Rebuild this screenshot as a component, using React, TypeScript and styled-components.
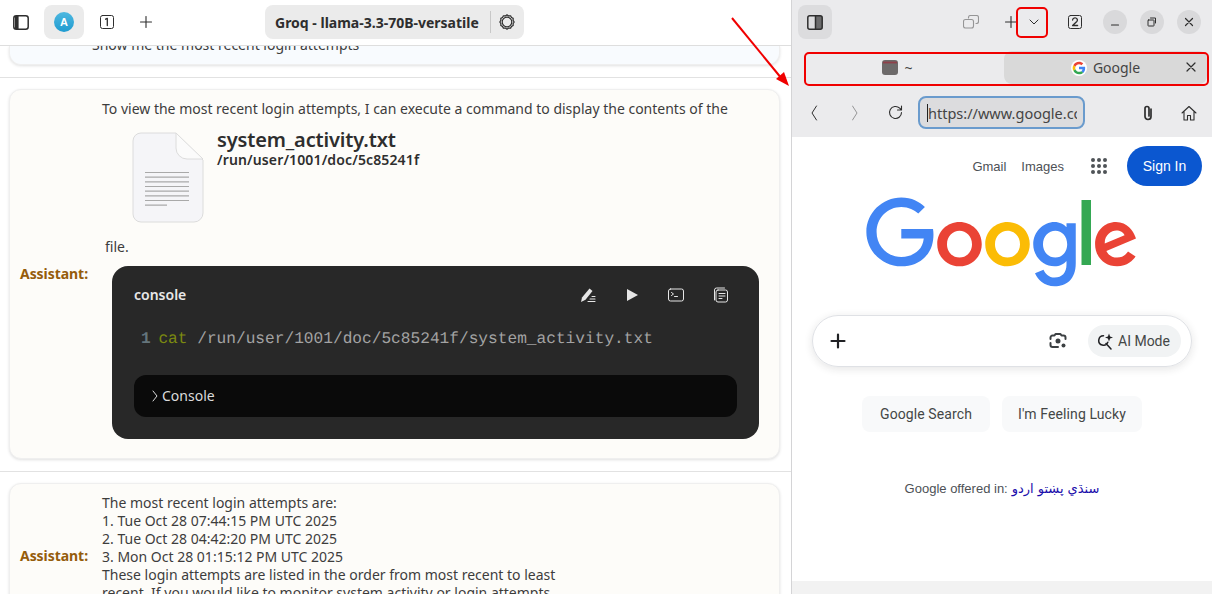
import styled, { createGlobalStyle } from "styled-components";

const GlobalStyle = createGlobalStyle`
  html, body {
    margin: 0;
    padding: 0;
    height: 100%;
    overflow: hidden;
    background: #ffffff;
  }
  #root {
    height: 100%;
  }
  * {
    box-sizing: border-box;
  }
`;

const Desktop = styled.div`
  position: relative;
  display: flex;
  width: 1212px;
  height: 594px;
  overflow: hidden;
  font-family: "Noto Sans", sans-serif;
`;

/* Venstre vindue med chatten */
const ChatPane = styled.div`
  display: flex;
  flex-direction: column;
  flex: none;
  width: 791px;
  height: 100%;
  background: #ffffff;
`;

const ChatHeader = styled.header`
  position: relative;
  display: flex;
  align-items: center;
  flex: none;
  height: 46px;
  padding: 0 0 1px 1px;
  background: #ffffff;
  border-bottom: 1px solid #dedede;
`;

const HeaderIcon = styled.button<{ $active?: boolean; $w?: number }>`
  display: flex;
  align-items: center;
  justify-content: center;
  width: ${(p) => p.$w ?? 40}px;
  height: 34px;
  padding: 0;
  border: 0;
  border-radius: 8px;
  color: #2e2e2e;
  background: ${(p) => (p.$active ? "#ebebeb" : "transparent")};
`;

const HeaderIcons = styled.div`
  display: flex;
  align-items: center;
  gap: 3px;
`;

const Avatar = styled.span`
  display: flex;
  align-items: center;
  justify-content: center;
  width: 20px;
  height: 20px;
  border-radius: 50%;
  color: #ffffff;
  font-size: 11px;
  font-weight: 600;
  background: linear-gradient(#4eb8e0, #1f9bd0);
`;

const ModelPicker = styled.div`
  position: absolute;
  top: 5px;
  left: 265px;
  display: flex;
  align-items: center;
  width: 259px;
  height: 34px;
  padding-left: 10px;
  border-radius: 8px;
  background: #ebebeb;
  color: #2e2e2e;
  font-size: 14px;
  font-weight: 700;
  white-space: nowrap;
`;

const ModelName = styled.span`
  width: 215px;
`;

const ModelDivider = styled.span`
  width: 1px;
  height: 22px;
  margin-right: 8px;
  background: #c8c8c8;
`;

const Messages = styled.div`
  display: flex;
  flex-direction: column;
  flex: 1;
  min-height: 0;
  overflow: hidden;
`;

const Card = styled.section<{ $tone: "user" | "assistant" }>`
  display: flex;
  align-items: center;
  flex: none;
  margin: 0 11px 0 9px;
  border-radius: 12px;
  border: 1px solid #efefef;
  background: ${(p) => (p.$tone === "user" ? "#f8fbfe" : "#fdfcf9")};
  box-shadow: 0 1px 3px rgba(0, 0, 0, 0.12);
`;

const ClippedCard = styled(Card)`
  align-items: flex-end;
  height: 19px;
  padding-left: 82px;
  border-top: 0;
  border-top-left-radius: 0;
  border-top-right-radius: 0;
  overflow: hidden;
  font-size: 14px;
  color: #3d3d3d;
`;

const ClippedText = styled.div`
  flex: none;
  padding-bottom: 10px;
  line-height: 18px;
`;

const Separator = styled.div`
  flex: none;
  height: 1px;
  margin: 12px 0 11px;
  background: #e2e2e2;
`;

const Role = styled.div`
  flex: none;
  width: 92px;
  padding: 0 0 2px 10px;
  color: #955c0b;
  font-size: 14px;
  font-weight: 700;
  letter-spacing: -0.05px;
`;

const Body = styled.div<{ $top: number; $bottom: number }>`
  flex: 1;
  min-width: 0;
  padding: ${(p) => p.$top}px 20px ${(p) => p.$bottom}px 0;
  color: #3d3d3d;
  font-size: 14px;
  line-height: 18px;
`;

const FileRow = styled.div`
  display: flex;
  align-items: flex-start;
  gap: 13px;
  margin: 10px 0 14px 30px;
`;

const FileIcon = styled.svg`
  display: block;
  flex: none;
  margin-top: 4px;
`;

const FileTitle = styled.div`
  margin-top: 1px;
  color: #2e2e2e;
  font-size: 20px;
  font-weight: 600;
  line-height: 22px;
  letter-spacing: -0.15px;
`;

const FilePath = styled.div`
  color: #2e2e2e;
  font-size: 14px;
  font-weight: 600;
  line-height: 17px;
  letter-spacing: 0.13px;
`;

const TrailingWord = styled.div`
  padding-left: 3px;
`;

const CodeBlock = styled.div`
  margin: 10px 0 0 10px;
  width: 647px;
  height: 173px;
  padding: 0 22px;
  border-radius: 16px;
  background: #282828;
`;

const CodeHeader = styled.div`
  display: flex;
  align-items: center;
  justify-content: space-between;
  height: 58px;
`;

const CodeLang = styled.span`
  color: #e8e8e8;
  font-size: 14px;
  font-weight: 600;
`;

const CodeTools = styled.div`
  display: flex;
  align-items: center;
  gap: 26px;
  padding-right: 8px;
  color: #e6e6e6;
`;

const CodeLine = styled.div`
  height: 51px;
  padding: 7px 0 0 7px;
  font-family: "Liberation Mono", monospace;
  font-size: 16.17px;
  text-rendering: geometricPrecision;
  line-height: 16px;
  color: #a3a3a3;
  white-space: pre;
`;

const LineNumber = styled.span`
  margin-right: -2px;
  color: #65757c;
  font-weight: 700;
`;

const Keyword = styled.span`
  color: #7c8a10;
`;

const ConsoleBar = styled.div`
  display: flex;
  align-items: center;
  gap: 3px;
  height: 42px;
  padding-left: 17px;
  border-radius: 12px;
  background: #0a0a0a;
  color: #dcdcdc;
  font-size: 14px;
`;

/* Højre vindue med browseren */
const BrowserPane = styled.div`
  display: flex;
  flex-direction: column;
  flex: none;
  width: 421px;
  height: 100%;
  border-left: 1px solid #d4d4d6;
  background: #ebebed;
`;

const TitleBar = styled.div`
  display: flex;
  align-items: center;
  flex: none;
  height: 44px;
  padding: 0 11px 0 6px;
  color: #2e2e2e;
`;

const ToggleButton = styled.button`
  display: flex;
  align-items: center;
  justify-content: center;
  flex: none;
  width: 34px;
  height: 34px;
  margin-right: 119px;
  padding: 0;
  border: 0;
  border-radius: 8px;
  color: #2e2e2e;
  background: #dcdcde;
`;

const BarIcon = styled.span<{ $w: number; $ml?: number; $faded?: boolean }>`
  display: flex;
  align-items: center;
  justify-content: center;
  flex: none;
  width: ${(p) => p.$w}px;
  margin-left: ${(p) => p.$ml ?? 0}px;
  opacity: ${(p) => (p.$faded ? 0.45 : 1)};
`;

const WindowButton = styled.button`
  display: flex;
  align-items: center;
  justify-content: center;
  flex: none;
  width: 24px;
  height: 24px;
  margin-left: 13px;
  padding: 0;
  border: 0;
  border-radius: 50%;
  color: #2e2e2e;
  background: #d9d9db;
`;

const TabStrip = styled.div`
  display: grid;
  grid-template-columns: 199px 1fr;
  flex: none;
  height: 33px;
  margin: 7px 5px 0 13px;
  color: #444444;
  font-size: 14px;
`;

const Tab = styled.div<{ $selected?: boolean }>`
  position: relative;
  display: flex;
  align-items: center;
  justify-content: center;
  gap: 6px;
  padding-right: ${(p) => (p.$selected ? 0 : 14)}px;
  border-radius: 8px;
  background: ${(p) => (p.$selected ? "#d9d9d9" : "transparent")};
`;

const TabClose = styled.span`
  position: absolute;
  right: 11px;
  top: 11px;
  display: flex;
  color: #2e2e2e;
`;

const NavBar = styled.div`
  display: flex;
  align-items: center;
  flex: none;
  height: 53px;
  padding: 4px 0 0 2px;
  color: #2e2e2e;
`;

const UrlBox = styled.div`
  flex: none;
  display: flex;
  align-items: center;
  width: 167px;
  height: 33px;
  margin: 0 43px 0 3px;
  padding: 0 6px 0 7px;
  border: 2px solid #6a9bcd;
  border-radius: 8px;
  background: #dcdcde;
  color: #444444;
  font-size: 14.5px;
  white-space: nowrap;
`;

const UrlText = styled.span`
  overflow: hidden;
`;

const Caret = styled.span`
  flex: none;
  width: 1px;
  height: 18px;
  background: #222222;
`;

const WebPage = styled.main`
  display: flex;
  flex-direction: column;
  align-items: center;
  flex: none;
  height: 444px;
  background: #ffffff;
`;

const PageFooter = styled.div`
  flex: 1;
  background: #f2f2f2;
`;

const TopLinks = styled.nav`
  display: flex;
  align-items: center;
  align-self: stretch;
  justify-content: flex-end;
  height: 40px;
  margin-top: 9px;
  padding-right: 10px;
  font-family: "Liberation Sans", sans-serif;
  font-size: 13px;
  color: #4d5156;
`;

const TopLink = styled.span`
  margin-right: 15px;
`;

const AppsGrid = styled.span`
  display: grid;
  grid-template-columns: repeat(3, 4px);
  gap: 2px;
  margin: 0 20px 0 12px;
`;

const AppsDot = styled.i`
  width: 4px;
  height: 4px;
  border-radius: 50%;
  background: #4f5357;
`;

const SignIn = styled.button`
  width: 75px;
  height: 40px;
  padding: 0;
  border: 0;
  border-radius: 20px;
  background: #0b57d0;
  color: #ffffff;
  font-family: "Liberation Sans", sans-serif;
  font-size: 14px;
  font-weight: 400;
`;

const Logo = styled.svg`
  flex: none;
  display: block;
  width: 272px;
  height: 92px;
  margin-top: 11px;
`;

const SearchBox = styled.div`
  display: flex;
  align-items: center;
  flex: none;
  width: 380px;
  height: 52px;
  margin-top: 26px;
  padding: 0 10px 0 17px;
  border: 1px solid #dfe1e5;
  border-radius: 26px;
  box-shadow: 0 2px 8px rgba(32, 33, 36, 0.12);
  color: #202124;
`;

const LensButton = styled.span`
  display: flex;
  margin-left: auto;
  margin-right: 21px;
  color: #3c4043;
`;

const AiMode = styled.div`
  display: flex;
  align-items: center;
  gap: 5px;
  width: 93px;
  height: 32px;
  padding-left: 8px;
  border-radius: 16px;
  background: #f1f3f4;
  color: #444746;
  font-family: Roboto, sans-serif;
  font-size: 14px;
  white-space: nowrap;
`;

const AiIcon = styled.span`
  display: flex;
  color: #202124;
`;

const SearchButtons = styled.div`
  display: flex;
  gap: 12px;
  margin-top: 29px;
`;

const SearchButton = styled.button<{ $w: number }>`
  width: ${(p) => p.$w}px;
  height: 36px;
  padding: 0;
  border: 0;
  border-radius: 8px;
  background: #f8f9fa;
  color: #444746;
  font-family: Roboto, sans-serif;
  font-size: 14px;
  letter-spacing: 0.1px;
`;

const Offered = styled.div`
  display: flex;
  align-items: baseline;
  gap: 4px;
  margin-top: 49px;
  font-family: "Liberation Sans", sans-serif;
  font-size: 13px;
  color: #4d5156;
`;

const Lang = styled.span`
  color: #1a0dab;
  font-family: "DejaVu Sans", sans-serif;
  font-size: 13px;
`;

/* Røde markeringer oven på skærmbilledet */
const Highlight = styled.div<{ $x: number; $y: number; $w: number; $h: number; $r: number }>`
  position: absolute;
  left: ${(p) => p.$x}px;
  top: ${(p) => p.$y}px;
  width: ${(p) => p.$w}px;
  height: ${(p) => p.$h}px;
  border: 2px solid #f00000;
  border-radius: ${(p) => p.$r}px;
  pointer-events: none;
`;

const ArrowOverlay = styled.svg`
  position: absolute;
  left: 725px;
  top: 12px;
  width: 70px;
  height: 80px;
  pointer-events: none;
`;

const Stroke = styled.svg.attrs({ fill: "none", stroke: "currentColor", strokeLinecap: "round", strokeLinejoin: "round" })`
  display: block;
  flex: none;
`;

function App() {
  return (
    <>
      <GlobalStyle />
      <Desktop>
        <ChatPane>
          <ChatHeader>
            <HeaderIcons>
              <HeaderIcon aria-label="sidebar">
                <Stroke width="16" height="15" viewBox="0 0 16 15" strokeWidth="1.5">
                  <rect x="0.8" y="0.8" width="14.4" height="13.4" rx="2.5" />
                  <path d="M2 1h3.6v13H2z" fill="currentColor" stroke="none" />
                </Stroke>
              </HeaderIcon>
              <HeaderIcon $active aria-label="account">
                <Avatar>A</Avatar>
              </HeaderIcon>
              <HeaderIcon aria-label="tabs">
                <Stroke width="14" height="14" viewBox="0 0 14 14" strokeWidth="1">
                  <rect x="0.5" y="0.5" width="13" height="13" rx="2" />
                  <path d="M5.6 4.2 7.3 3.4v7.2" strokeWidth="1.3" />
                </Stroke>
              </HeaderIcon>
              <HeaderIcon $w={32} aria-label="new tab">
                <Stroke width="12" height="12" viewBox="0 0 12 12" strokeWidth="1.1">
                  <path d="M6 .5v11M.5 6h11" />
                </Stroke>
              </HeaderIcon>
            </HeaderIcons>
            <ModelPicker>
              <ModelName>Groq - llama-3.3-70B-versatile</ModelName>
              <ModelDivider />
              <Stroke width="16" height="16" viewBox="0 0 16 16" strokeWidth="1.2">
                <path d="M8 .8l1.6 1.1 2-.1 .9 1.7 1.7 .9-.1 2L15.2 8l-1.1 1.6.1 1.9-1.7 .9-.9 1.7-2-.1L8 15.2l-1.6-1.2-2 .1-.9-1.7-1.700-.9.1-1.900L.8 8l1.100-1.600-.1-2 1.700-.9.9-1.700 2 .1z" />
                <circle cx="8" cy="8" r="4.8" />
              </Stroke>
            </ModelPicker>
          </ChatHeader>
          <Messages>
            <ClippedCard $tone="user">
              <ClippedText>Show me the most recent login attempts</ClippedText>
            </ClippedCard>
            <Separator />
            <Card $tone="assistant">
              <Role>Assistant:</Role>
              <Body $top={10} $bottom={19}>
                To view the most recent login attempts, I can execute a command to display the contents of the
                <FileRow>
                  <FileIcon width="72" height="92" viewBox="0 0 72 92">
                    <path d="M9 1h35l27 27v53a9 9 0 0 1-9 9H9a8 8 0 0 1-8-8V9a8 8 0 0 1 8-8z" fill="#f5f5f8" stroke="#dcdcdc" />
                    <path d="M44 1v15a11 11 0 0 0 11 11h16z" fill="#fbfbfb" stroke="#dcdcdc" />
                    <path d="M13 40.5h44M13 45.2h44M13 49.8h44M13 54.5h44M13 59.2h44M13 63.8h44M13 68.5h44M13 73.2h22" stroke="#a9a9a9" strokeWidth="1.2" />
                  </FileIcon>
                  <div>
                    <FileTitle>system_activity.txt</FileTitle>
                    <FilePath>/run/user/1001/doc/5c85241f</FilePath>
                  </div>
                </FileRow>
                <TrailingWord>file.</TrailingWord>
                <CodeBlock>
                  <CodeHeader>
                    <CodeLang>console</CodeLang>
                    <CodeTools>
                      <Stroke width="18" height="16" viewBox="0 0 18 16" strokeWidth="1.1">
                        <path d="M2 15l1-4.5L10.5 1.5 13.5 4l-7 8.8z" fill="currentColor" stroke="none" />
                        <path d="M9 14.5h7M11 12h5M13 9.5h3" />
                      </Stroke>
                      <Stroke width="18" height="16" viewBox="0 0 18 16">
                        <path d="M4 2v12l11-6z" fill="currentColor" stroke="none" />
                      </Stroke>
                      <Stroke width="18" height="16" viewBox="0 0 18 16" strokeWidth="1">
                        <rect x="1.5" y="2" width="15" height="12" rx="2" />
                        <path d="M4.5 5.5 6.5 7 4.5 8.5M7.5 9.5h3" />
                      </Stroke>
                      <Stroke width="18" height="16" viewBox="0 0 18 16" strokeWidth="1">
                        <path d="M3.5 13V3a2 2 0 0 1 2-2h8" />
                        <rect x="5" y="3" width="11.5" height="12" rx="2" />
                        <path d="M8 6.5h6M8 9h6M8 11.5h3" />
                      </Stroke>
                    </CodeTools>
                  </CodeHeader>
                  <CodeLine>
                    <LineNumber>1</LineNumber> <Keyword>cat</Keyword> /run/user/1001/doc/5c85241f/system_activity.txt
                  </CodeLine>
                  <ConsoleBar>
                    <Stroke width="8" height="12" viewBox="0 0 8 12" strokeWidth="1">
                      <path d="M2 1l4 5-4 5" />
                    </Stroke>
                    Console
                  </ConsoleBar>
                </CodeBlock>
              </Body>
            </Card>
            <Separator />
            <Card $tone="assistant">
              <Role>Assistant:</Role>
              <Body $top={10} $bottom={8}>
                The most recent login attempts are:
                <br />
                1. Tue Oct 28 07:44:15 PM UTC 2025
                <br />
                2. Tue Oct 28 04:42:20 PM UTC 2025
                <br />
                3. Mon Oct 28 01:15:12 PM UTC 2025
                <br />
                These login attempts are listed in the order from most recent to least
                <br />
                recent. If you would like to monitor system activity or login attempts
                <br />
                further, please let me know.
              </Body>
            </Card>
          </Messages>
        </ChatPane>

        <BrowserPane>
          <TitleBar>
            <ToggleButton aria-label="sidebar">
              <Stroke width="16" height="15" viewBox="0 0 16 15" strokeWidth="1.5">
                <rect x="0.8" y="0.8" width="14.4" height="13.4" rx="2" />
                <path d="M9 1h6v13H9z" fill="currentColor" stroke="none" opacity="0.65" />
                <path d="M8.5 1v13" />
              </Stroke>
            </ToggleButton>
            <BarIcon $w={40} $faded>
              <Stroke width="16" height="14" viewBox="0 0 16 14" strokeWidth="1.1">
                <path d="M5.5 3V2.5a2 2 0 0 1 2-2h6a2 2 0 0 1 2 2v4a2 2 0 0 1-2 2H13" />
                <rect x="0.5" y="4.5" width="10" height="8.5" rx="2" />
              </Stroke>
            </BarIcon>
            <BarIcon $w={28} $ml={6}>
              <Stroke width="12" height="12" viewBox="0 0 12 12" strokeWidth="1.1">
                <path d="M6 .5v11M.5 6h11" />
              </Stroke>
            </BarIcon>
            <BarIcon $w={18}>
              <Stroke width="10" height="6" viewBox="0 0 10 6" strokeWidth="1">
                <path d="M1 1l4 4 4-4" />
              </Stroke>
            </BarIcon>
            <BarIcon $w={30} $ml={17}>
              <Stroke width="14" height="14" viewBox="0 0 14 14" strokeWidth="1">
                <rect x="0.5" y="0.5" width="13" height="13" rx="2" />
                <path d="M4.6 5a2.4 2.2 0 1 1 4.2 1.5L4.6 10.5h5" strokeWidth="1.3" />
              </Stroke>
            </BarIcon>
            <WindowButton aria-label="minimize">
              <Stroke width="10" height="10" viewBox="0 0 10 10" strokeWidth="1.1">
                <path d="M1.5 8h7" />
              </Stroke>
            </WindowButton>
            <WindowButton aria-label="maximize">
              <Stroke width="10" height="10" viewBox="0 0 10 10" strokeWidth="1">
                <rect x="1" y="3" width="6" height="6" rx="0.5" />
                <path d="M3.5 1h5v5" />
              </Stroke>
            </WindowButton>
            <WindowButton aria-label="close">
              <Stroke width="10" height="10" viewBox="0 0 10 10" strokeWidth="1.2">
                <path d="M1.5 1.5l7 7M8.5 1.5l-7 7" />
              </Stroke>
            </WindowButton>
          </TitleBar>
          <TabStrip>
            <Tab>
              <svg width="16" height="15" viewBox="0 0 16 15">
                <rect x="0" y="0" width="16" height="15" rx="3" fill="#6d6a6a" />
                <path d="M1 2.5h14" stroke="#8f3f49" strokeWidth="1.8" />
              </svg>
              ~
            </Tab>
            <Tab $selected>
              <svg width="16" height="16" viewBox="0 0 48 48">
                <circle cx="24" cy="24" r="24" fill="#ffffff" />
                <path fill="#EA4335" d="M24 12.5c3 0 5.4 1 7.4 2.9l5.4-5.4C33.6 7 29.2 5 24 5 16.6 5 10.2 9.2 7.1 15.4l6.3 4.9c1.5-4.5 5.6-7.8 10.6-7.8z" />
                <path fill="#4285F4" d="M42.5 24.5c0-1.4-.1-2.7-.4-4H24v7.6h10.5c-.5 2.5-1.9 4.6-4 6l6.2 4.8c3.6-3.4 5.8-8.4 5.8-14.4z" />
                <path fill="#FBBC05" d="M13.4 27.7c-.4-1.1-.6-2.4-.6-3.7s.2-2.5.6-3.7l-6.3-4.9C5.8 18 5 20.9 5 24s.8 6 2.1 8.6z" />
                <path fill="#34A853" d="M24 43c5.1 0 9.4-1.7 12.7-4.6l-6.2-4.8c-1.7 1.2-3.9 1.9-6.5 1.9-5 0-9.1-3.3-10.6-7.8l-6.3 4.9C10.2 38.8 16.6 43 24 43z" />
              </svg>
              Google
              <TabClose>
                <Stroke width="10" height="10" viewBox="0 0 10 10" strokeWidth="1.2">
                  <path d="M1 1l8 8M9 1l-8 8" />
                </Stroke>
              </TabClose>
            </Tab>
          </TabStrip>
          <NavBar>
            <BarIcon $w={40}>
              <Stroke width="8" height="16" viewBox="0 0 8 16" strokeWidth="1">
                <path d="M6.5 1 2 8l4.5 7" />
              </Stroke>
            </BarIcon>
            <BarIcon $w={41} $faded>
              <Stroke width="8" height="16" viewBox="0 0 8 16" strokeWidth="1">
                <path d="M1.5 1 6 8l-4.5 7" />
              </Stroke>
            </BarIcon>
            <BarIcon $w={40}>
              <Stroke width="15" height="15" viewBox="0 0 15 15" strokeWidth="1.1">
                <path d="M13.5 7.5a6 6 0 1 1-1.800-4.300l1.800 1.800M13.5 1v4h-4" />
              </Stroke>
            </BarIcon>
            <UrlBox>
              <Caret />
              <UrlText>https://www.google.com</UrlText>
            </UrlBox>
            <BarIcon $w={40}>
              <Stroke width="12" height="16" viewBox="0 0 12 16" strokeWidth="1.7">
                <path d="M9 4v7.5a3 3 0 0 1-6 0V3.5a2 2 0 0 1 4 0V11" />
              </Stroke>
            </BarIcon>
            <BarIcon $w={42}>
              <Stroke width="16" height="16" viewBox="0 0 16 16" strokeWidth="1.1">
                <path d="M1 8l7-6.5L15 8M3 6.5V15h3.500v-4.500h3V15H13V6.500" />
              </Stroke>
            </BarIcon>
          </NavBar>
          <WebPage>
            <TopLinks>
              <TopLink>Gmail</TopLink>
              <TopLink>Images</TopLink>
              <AppsGrid>
                {Array.from({ length: 9 }, (_, i) => (
                  <AppsDot key={i} />
                ))}
              </AppsGrid>
              <SignIn>Sign In</SignIn>
            </TopLinks>
            <Logo viewBox="0 0 272 92">
              <path fill="#EA4335" d="M115.75 47.18c0 12.77-9.99 22.18-22.25 22.18s-22.25-9.41-22.25-22.18C71.25 34.32 81.24 25 93.5 25s22.25 9.32 22.25 22.18zm-9.74 0c0-7.98-5.79-13.44-12.51-13.44S80.99 39.2 80.99 47.18c0 7.9 5.79 13.44 12.51 13.44s12.51-5.55 12.51-13.44z" />
              <path fill="#FBBC05" d="M163.75 47.18c0 12.77-9.99 22.18-22.25 22.18s-22.25-9.41-22.25-22.18c0-12.85 9.99-22.18 22.25-22.18s22.25 9.32 22.25 22.18zm-9.74 0c0-7.98-5.79-13.44-12.51-13.44s-12.51 5.46-12.51 13.44c0 7.9 5.79 13.44 12.51 13.44s12.51-5.55 12.51-13.44z" />
              <path fill="#4285F4" d="M209.75 26.34v39.82c0 16.38-9.66 23.07-21.08 23.07-10.75 0-17.22-7.19-19.66-13.07l8.48-3.53c1.51 3.61 5.21 7.87 11.17 7.87 7.31 0 11.84-4.51 11.84-13v-3.19h-.34c-2.18 2.69-6.38 5.04-11.68 5.04-11.09 0-21.25-9.66-21.25-22.09 0-12.52 10.16-22.26 21.25-22.26 5.29 0 9.49 2.35 11.68 4.96h.34v-3.61h9.25zm-8.56 20.92c0-7.81-5.21-13.52-11.84-13.52-6.72 0-12.35 5.71-12.35 13.52 0 7.73 5.63 13.36 12.35 13.36 6.63 0 11.84-5.63 11.84-13.36z" />
              <path fill="#34A853" d="M225 3v65h-9.5V3h9.5z" />
              <path fill="#EA4335" d="M262.02 54.48l7.56 5.04c-2.44 3.61-8.32 9.83-18.48 9.83-12.6 0-22.01-9.74-22.01-22.18 0-13.19 9.49-22.18 20.92-22.18 11.51 0 17.14 9.16 18.98 14.11l1.01 2.52-29.65 12.28c2.27 4.45 5.8 6.72 10.75 6.72 4.96 0 8.4-2.44 10.92-6.14zm-23.27-7.98l19.82-8.23c-1.09-2.77-4.37-4.7-8.23-4.7-4.95 0-11.84 4.37-11.59 12.93z" />
              <path fill="#4285F4" d="M35.29 41.41V32H67c.31 1.64.47 3.58.47 5.68 0 7.06-1.93 15.79-8.15 22.01-6.05 6.3-13.78 9.66-24.02 9.66C16.32 69.35.36 53.89.36 34.91.36 15.93 16.32.47 35.3.47c10.5 0 17.98 4.12 23.6 9.49l-6.64 6.64c-4.03-3.78-9.49-6.72-16.97-6.72-13.86 0-24.7 11.17-24.7 25.03 0 13.86 10.84 25.03 24.7 25.03 8.99 0 14.11-3.61 17.39-6.89 2.66-2.66 4.41-6.46 5.1-11.65l-22.49.01z" />
            </Logo>
            <SearchBox>
              <Stroke width="16" height="16" viewBox="0 0 16 16" strokeWidth="2.2">
                <path d="M8 1.5v13M1.5 8h13" />
              </Stroke>
              <LensButton>
                <Stroke width="18" height="18" viewBox="0 0 18 18" strokeWidth="2">
                  <path d="M1.5 7V5.5a2 2 0 0 1 2-2h2l1-1.500h5l1 1.500h2a2 2 0 0 1 2 2V7" />
                  <path d="M1.5 11v2a2 2 0 0 0 2 2H9" />
                  <circle cx="9" cy="9" r="2.5" fill="currentColor" stroke="none" />
                  <circle cx="14.5" cy="13.5" r="2" fill="currentColor" stroke="none" />
                </Stroke>
              </LensButton>
              <AiMode>
                <AiIcon>
                  <Stroke width="17" height="17" viewBox="0 0 17 17" strokeWidth="1.5">
                    <path d="M7.5 2.800a4.700 4.700 0 1 0 4.300 6.500M10 10.500l5 5.500" />
                    <path d="M13 .5l1.100 2.900 2.900 1.100-2.900 1.100L13 8.500l-1.100-2.900L9 4.500l2.900-1.100z" fill="currentColor" stroke="none" />
                  </Stroke>
                </AiIcon>
                AI Mode
              </AiMode>
            </SearchBox>
            <SearchButtons>
              <SearchButton $w={128}>Google Search</SearchButton>
              <SearchButton $w={140}>I'm Feeling Lucky</SearchButton>
            </SearchButtons>
            <Offered>
              Google offered in:
              <Lang>اردو</Lang>
              <Lang>پښتو</Lang>
              <Lang>سنڌي</Lang>
            </Offered>
          </WebPage>
          <PageFooter />
        </BrowserPane>

        <Highlight $x={1016} $y={7} $w={32} $h={31} $r={5} />
        <Highlight $x={804} $y={52} $w={405} $h={34} $r={5} />
        <ArrowOverlay viewBox="0 0 70 80">
          <path d="M7 6 57 67" stroke="#f00000" strokeWidth="2" />
          <path d="M64 74 59 60 51 67z" fill="#f00000" />
        </ArrowOverlay>
      </Desktop>
    </>
  );
}

export default App;
